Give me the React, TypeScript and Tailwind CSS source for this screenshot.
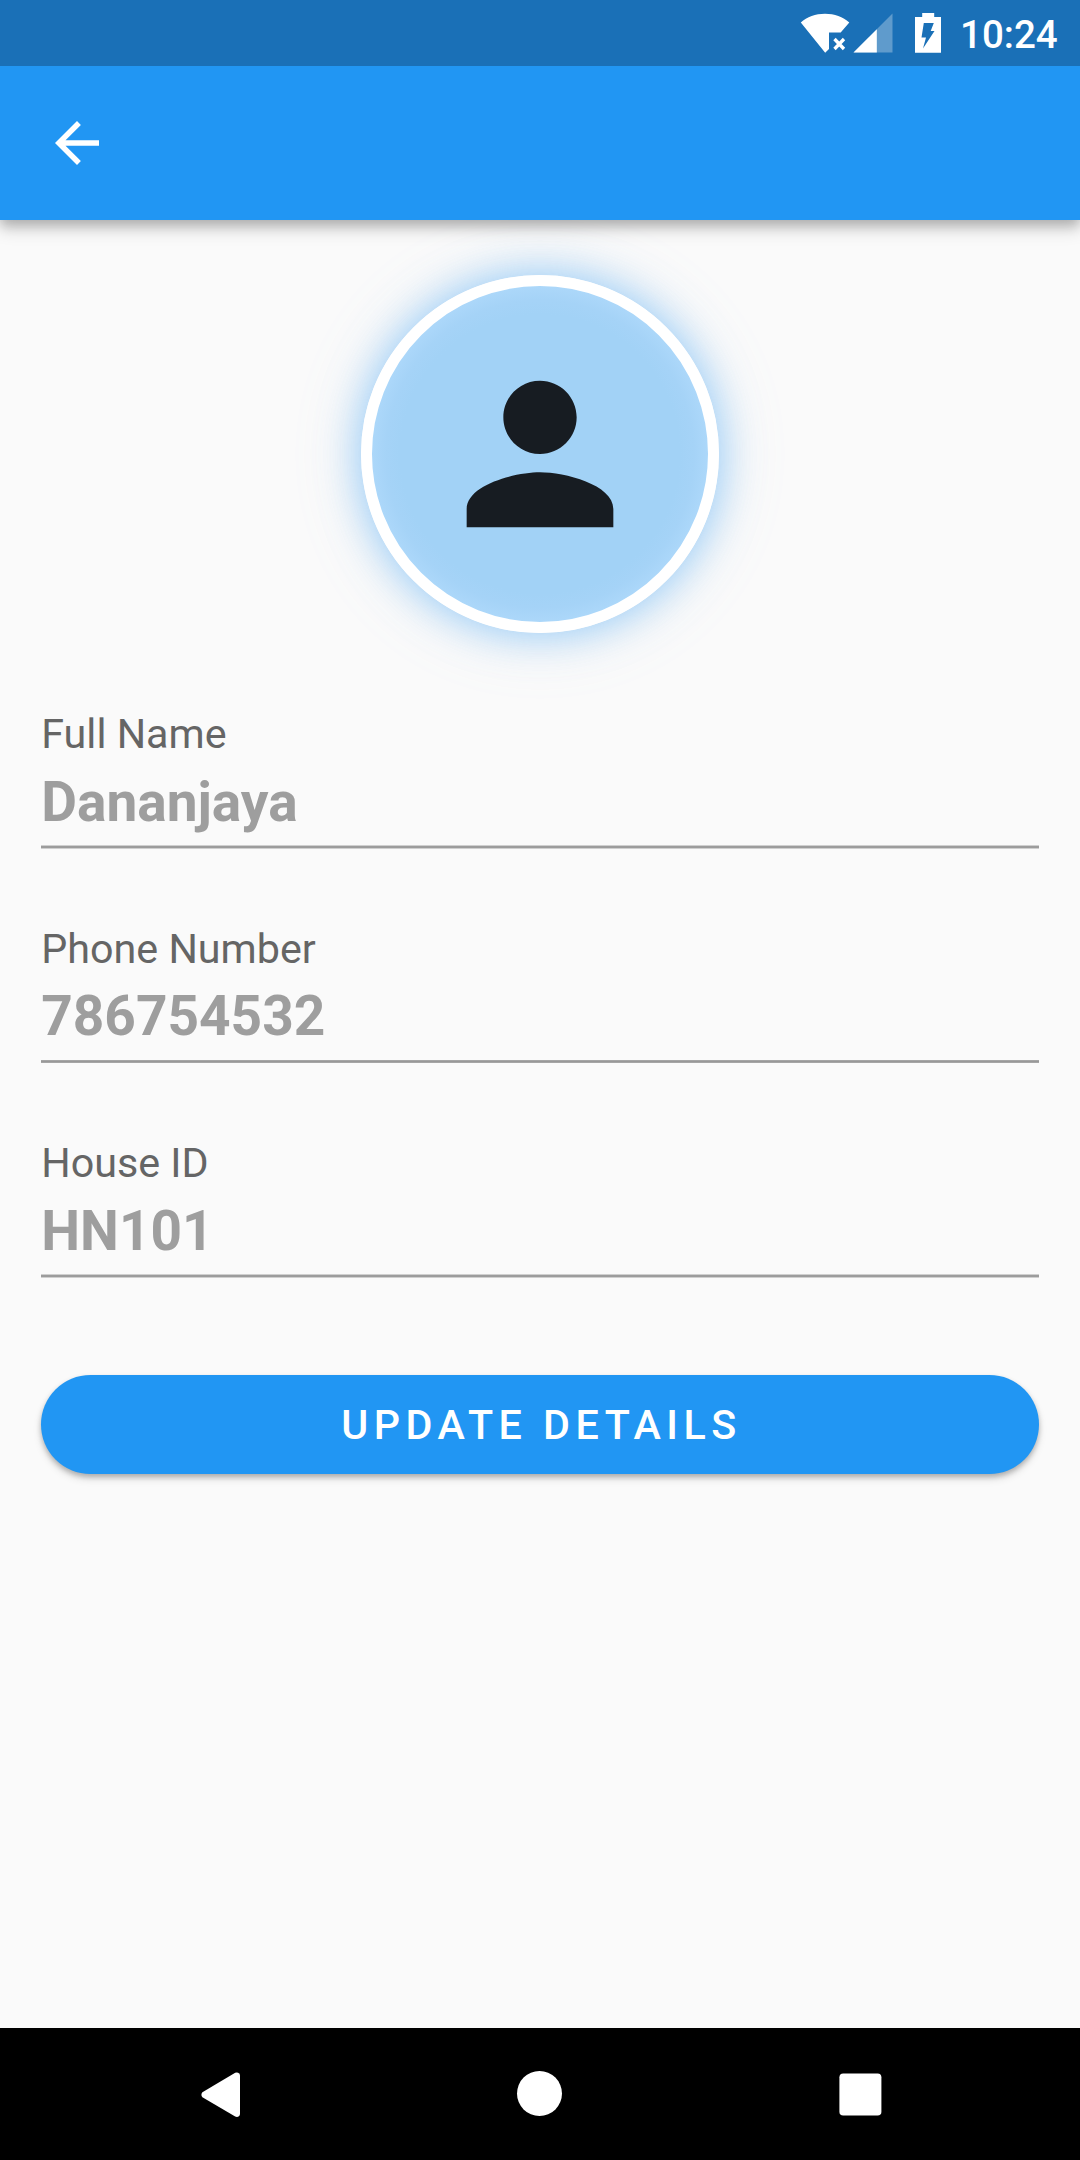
type FieldProps = { label: string; value: string; line: string };

const softLine =
  "h-1 bg-[linear-gradient(to_bottom,#cfcfcf_1px,#9c9c9c_1px,#9c9c9c_3px,#cfcfcf_3px)]";
const crispLine =
  "h-[3px] bg-[linear-gradient(to_bottom,#a5a5a5_1px,#989898_1px,#989898_2px,#a5a5a5_2px)]";

function Field({ label, value, line }: FieldProps) {
  return (
    <div className="h-[214.5px]">
      <div className="h-[48px] text-[41.25px] leading-[48px] text-[#656565]">{label}</div>
      <div className="mt-[11.75px] h-[64.25px] text-[55px] leading-[64px] font-bold text-[#9e9e9e]">
        {value}
      </div>
      <div className="pt-[11px]">
        <div className={line} />
      </div>
    </div>
  );
}

function StatusBar() {
  return (
    <div className="flex h-[66px] items-start bg-[#1a70b7] pl-[800px] text-white">
      <svg className="mt-[13px] h-10 w-[50px]" viewBox="0 0 50 40" fill="currentColor">
        <path d="M.8 9.5C7 3.800 15.500.8 25 .8s18 3 24.300 8.700L40.700 19.500H29V36L25.200 39.800Z" />
        <path d="m34.500 26 9.500 10M44 26l-9.500 10" stroke="currentColor" strokeWidth="3.300" />
      </svg>
      <svg className="mt-[13px] ml-[3px] h-10 w-10" viewBox="0 0 40 40" fill="currentColor">
        <path d="M39.500.5v39H.5Z" opacity=".3" />
        <path d="M23.800 16.200v23.300H.5Z" />
      </svg>
      <svg className="mt-[13px] ml-[22px] h-10 w-[26px]" viewBox="0 0 26 40">
        <path d="M7.200 0h12v4H26v35.700H0V4h7.200Z" fill="#fff" />
        <path d="M8.800 10h10L15.700 18h3.800L8 35.500 11 24.500H6.500Z" fill="#1a70b7" />
      </svg>
      <div className="ml-[19px] pt-[12px] text-[38.5px] leading-[46px] font-medium">10:24</div>
    </div>
  );
}

export default function App() {
  return (
    <div className="flex h-[2160px] w-[1080px] flex-col overflow-hidden bg-[#fafafa] font-[Roboto,sans-serif]">
      <div className="relative z-10 shadow-[0_5px_11px_rgba(0,0,0,0.2),0_10px_16px_rgba(0,0,0,0.14)]">
        <StatusBar />
        <header className="flex h-[154px] items-center bg-[#2196f3] pl-11">
          <svg className="h-[66px] w-[66px]" viewBox="0 0 24 24" fill="#fff">
            <path d="M20 11H7.830l5.590-5.590L12 4l-8 8 8 8 1.410-1.410L7.830 13H20v-2z" />
          </svg>
        </header>
      </div>

      <main className="flex flex-1 flex-col px-[41.25px] pt-[55px]">
        <div className="flex h-[357.5px] w-[357.5px] items-center justify-center self-center rounded-full border-[11px] border-white bg-[radial-gradient(circle_closest-side,#a2d2f6_78%,#a5d3f7_86%,#add8fa_95%)] bg-origin-border shadow-[0_0_38px_3px_rgba(100,181,246,0.6),0_0_66px_6px_rgba(144,180,230,0.16)]">
          <svg className="h-[220px] w-[220px] shrink-0" viewBox="0 0 24 24" fill="#171c22">
            <path d="M12 12c2.210 0 4-1.790 4-4s-1.790-4-4-4-4 1.790-4 4 1.790 4 4 4zm0 2c-2.670 0-8 1.340-8 4v2h16v-2c0-2.660-5.330-4-8-4z" />
          </svg>
        </div>

        <section className="mt-[77.5px]">
          <Field label="Full Name" value="Dananjaya" line={softLine} />
          <Field label="Phone Number" value="786754532" line={crispLine} />
          <Field label="House ID" value="HN101" line={softLine} />
        </section>

        <button className="mt-[21.5px] flex h-[99px] items-center justify-center rounded-full bg-[#2196f3] pt-0.5 pl-[3px] text-[41.25px] leading-none font-medium tracking-[5.5px] text-white shadow-[0_3px_5px_rgba(0,0,0,0.22),0_5px_8px_rgba(0,0,0,0.12)]">
          UPDATE DETAILS
        </button>
      </main>

      <nav className="flex h-[132px] items-start bg-black pl-[201px] text-white">
        <svg className="mt-11 h-[46px] w-[40px]" viewBox="0 0 40 46" fill="currentColor">
          <path d="M1.400 20.200 34.200.7Q36.500-.2 38.200 1.400 39 2.200 39 3.500V41.800Q39 43.200 38.200 44 36.500 45.500 34.200 44.600L1.400 25.200Q-.6 22.700 1.400 20.200Z" />
        </svg>
        <div className="mt-[43px] ml-[276px] h-[45px] w-[45px] rounded-full bg-white" />
        <svg className="mt-[45px] ml-[277px] h-11 w-11" viewBox="0 0 44 44" fill="currentColor">
          <rect x=".4" y=".4" width="42" height="42.200" rx="3.800" />
        </svg>
      </nav>
    </div>
  );
}
